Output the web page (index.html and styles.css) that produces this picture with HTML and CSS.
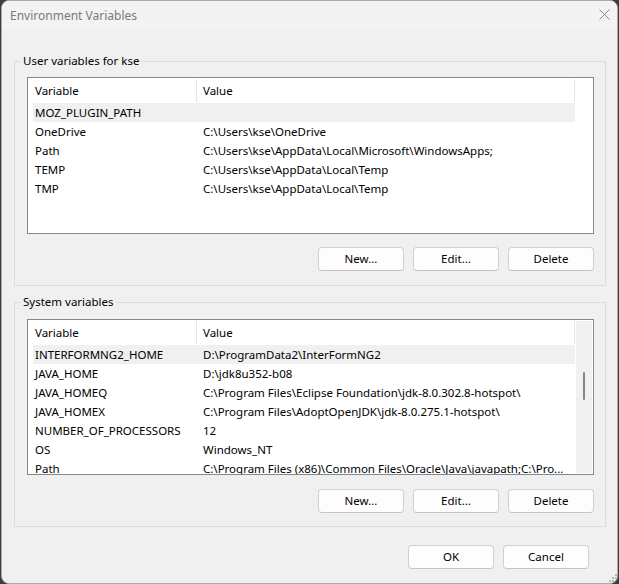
FILE: index.html
```html
<!DOCTYPE html>
<html>
<head>
<meta charset="utf-8">
<title>Environment Variables</title>
<link rel="stylesheet" href="styles.css">
</head>
<body>
<div class="window">
  <div class="titlebar">
    <span class="title">Environment Variables</span>
    <svg class="close" width="11" height="11" viewBox="0 0 11 11"><path d="M0.5 0.5L10.5 10.5M10.5 0.5L0.5 10.5" stroke="#8a8a8a" stroke-width="1" fill="none"/></svg>
  </div>
  <div class="content">
    <fieldset class="group group-user">
      <legend>User variables for kse</legend>
      <div class="list list-user">
        <div class="rows">
          <div class="row head"><span class="c1">Variable</span><span class="c2">Value</span></div>
          <div class="row sel"><span class="c1">MOZ_PLUGIN_PATH</span><span class="c2"></span></div>
          <div class="row"><span class="c1">OneDrive</span><span class="c2">C:\Users\kse\OneDrive</span></div>
          <div class="row"><span class="c1">Path</span><span class="c2">C:\Users\kse\AppData\Local\Microsoft\WindowsApps;</span></div>
          <div class="row"><span class="c1">TEMP</span><span class="c2">C:\Users\kse\AppData\Local\Temp</span></div>
          <div class="row"><span class="c1">TMP</span><span class="c2">C:\Users\kse\AppData\Local\Temp</span></div>
        </div>
      </div>
      <div class="buttons">
        <button class="btn">New...</button>
        <button class="btn">Edit...</button>
        <button class="btn">Delete</button>
      </div>
    </fieldset>
    <fieldset class="group group-system">
      <legend>System variables</legend>
      <div class="list list-system">
        <div class="rows">
          <div class="row head"><span class="c1">Variable</span><span class="c2">Value</span></div>
          <div class="row sel"><span class="c1">INTERFORMNG2_HOME</span><span class="c2">D:\ProgramData2\InterFormNG2</span></div>
          <div class="row"><span class="c1">JAVA_HOME</span><span class="c2">D:\jdk8u352-b08</span></div>
          <div class="row"><span class="c1">JAVA_HOMEQ</span><span class="c2">C:\Program Files\Eclipse Foundation\jdk-8.0.302.8-hotspot\</span></div>
          <div class="row"><span class="c1">JAVA_HOMEX</span><span class="c2">C:\Program Files\AdoptOpenJDK\jdk-8.0.275.1-hotspot\</span></div>
          <div class="row"><span class="c1">NUMBER_OF_PROCESSORS</span><span class="c2">12</span></div>
          <div class="row"><span class="c1">OS</span><span class="c2">Windows_NT</span></div>
          <div class="row"><span class="c1">Path</span><span class="c2">C:\Program Files (x86)\Common Files\Oracle\Java\javapath;C:\Pro...</span></div>
        </div>
        <div class="scrollbar"><div class="thumb"></div></div>
      </div>
      <div class="buttons">
        <button class="btn">New...</button>
        <button class="btn">Edit...</button>
        <button class="btn">Delete</button>
      </div>
    </fieldset>
    <div class="footer">
      <button class="btn">OK</button>
      <button class="btn">Cancel</button>
    </div>
  </div>
  <svg class="grip" width="9" height="9" viewBox="0 0 9 9">
    <rect x="7" y="1" width="2" height="2" fill="#b5b5b5"/>
    <rect x="4" y="4" width="2" height="2" fill="#b5b5b5"/>
    <rect x="7" y="4" width="2" height="2" fill="#b5b5b5"/>
    <rect x="1" y="7" width="2" height="2" fill="#b5b5b5"/>
    <rect x="4" y="7" width="2" height="2" fill="#b5b5b5"/>
    <rect x="7" y="7" width="2" height="2" fill="#b5b5b5"/>
  </svg>
</div>
</body>
</html>
```

FILE: styles.css
```css
* { box-sizing: border-box; }

html, body {
  margin: 0;
  padding: 0;
  height: 584px;
  overflow: hidden;
}

body {
  background: #3c3c3c;
  font-family: "Noto Sans", "Open Sans", sans-serif;
  font-size: 11.5px;
  color: #000;
}

.window {
  position: relative;
  margin-left: 1px;
  width: 617px;
  height: 584px;
  background: #f0f0f0;
  border: 1px solid #a9a9a9;
  border-radius: 8px;
  display: flex;
  flex-direction: column;
  overflow: hidden;
}

.titlebar {
  height: 29px;
  flex: none;
  background: #f3f3f3;
  display: flex;
  align-items: center;
  padding-left: 8px;
  padding-right: 7px;
}

.title {
  flex: 1;
  color: #7a7a7a;
  line-height: 16px;
  font-size: 12px;
}

.close {
  display: block;
  margin-top: -2px;
}

.content {
  flex: 1;
  display: flex;
  flex-direction: column;
  padding: 23px 11px 0 12px;
}

.group {
  margin: 0;
  min-width: 0;
  border: 1px solid #dcdcdc;
  padding: 8px 11px 14px 12px;
}

.group legend {
  padding: 0 2px;
  margin-left: -6px;
  line-height: 16px;
  background: #f0f0f0;
}

.group-system {
  margin-top: 8px;
  padding-top: 9px;
  padding-bottom: 13px;
}

.list {
  background: #fff;
  border: 1px solid #828790;
  display: flex;
  overflow: hidden;
}

.list-user { height: 157px; }
.list-system { height: 156px; }

.rows {
  width: 542px;
  margin-left: 5px;
  flex: none;
  overflow: hidden;
}

.row {
  display: grid;
  grid-template-columns: 164px 378px;
  height: 19px;
  line-height: 19px;
  white-space: nowrap;
}

.row .c1 {
  padding-left: 2px;
  overflow: hidden;
}

.row .c2 {
  padding-left: 6px;
  overflow: hidden;
  text-overflow: ellipsis;
}

.row.head {
  height: 25px;
}

.row.head .c1,
.row.head .c2 {
  border-right: 1px solid #e5e5e5;
  margin-top: 1px;
  height: 23px;
  line-height: 24px;
}

.row.sel {
  background: #f0f0f0;
}

.scrollbar {
  width: 17px;
  margin: 1px;
  background: #f1f1f1;
  display: flex;
  justify-content: center;
}

.thumb {
  width: 2px;
  height: 28px;
  margin-top: 51px;
  background: #868686;
  border-radius: 1px;
}

.buttons {
  display: flex;
  justify-content: flex-end;
  gap: 9px;
  margin-top: 13px;
}

.group-system .buttons {
  margin-top: 14px;
}

.btn {
  width: 86px;
  height: 24px;
  padding: 0;
  font-family: inherit;
  font-size: 11.5px;
  color: #000;
  background: #fdfdfd;
  border: 1px solid #d0d0d0;
  border-bottom-color: #c4c4c4;
  border-radius: 4px;
  line-height: 20px;
}

.footer {
  display: flex;
  justify-content: flex-end;
  gap: 9px;
  margin-top: 18px;
  padding-right: 17px;
}

.grip {
  position: absolute;
  right: 0;
  bottom: 1px;
}
```
